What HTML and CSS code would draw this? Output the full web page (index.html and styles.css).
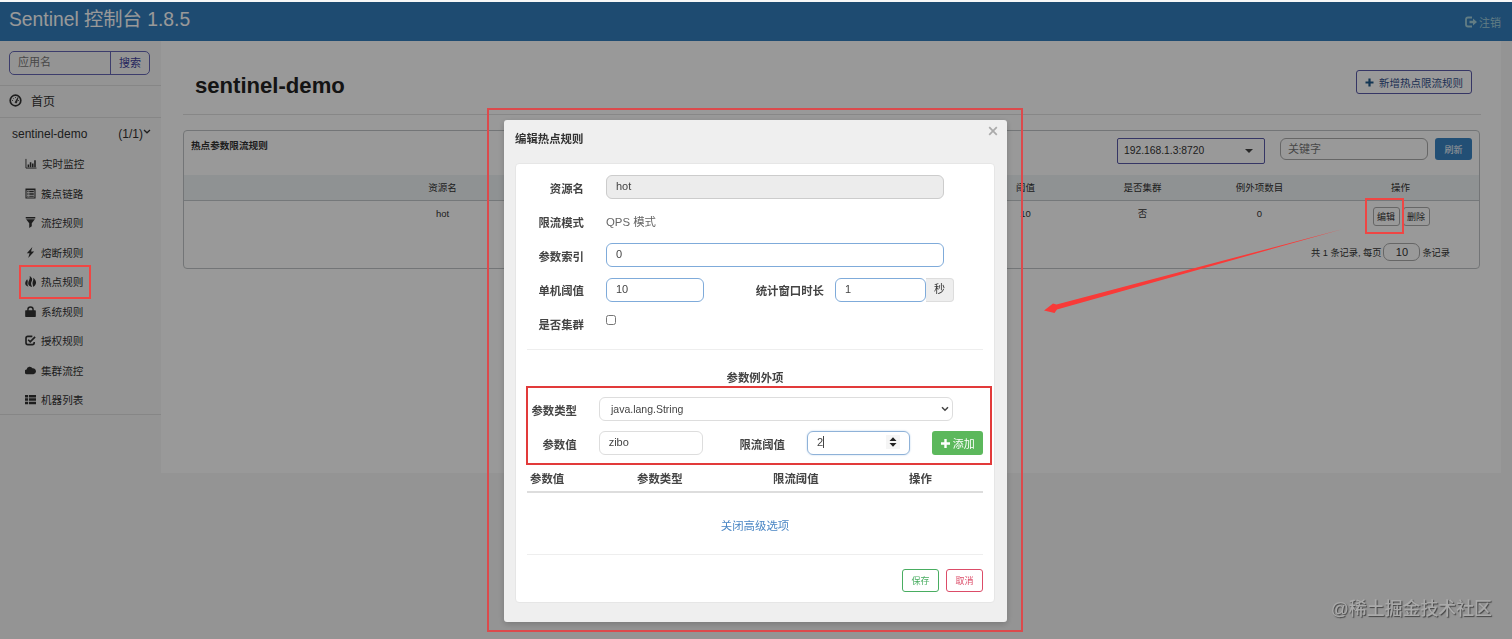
FILE: index.html
```html
<!DOCTYPE html>
<html>
  <head>
    <meta charset="utf-8">
    <title>Sentinel 控制台</title>
    <link rel="stylesheet" href="styles.css">
  </head>
  <body>
    <header class="navbar">
      <span class="brand">Sentinel 控制台 1.8.5</span>
      <a class="logout">
        <svg width="12" height="12" viewBox="0 0 12 12"><path d="M7 1.500H3Q1 1.500 1 3.500v5q0 2 2 2h4" fill="none" stroke="currentColor" stroke-width="1.800"/><path d="M4.500 4.700H8V2.400L12 6 8 9.600V7.300H4.500z" fill="currentColor"/></svg>
        <span>注销</span>
      </a>
    </header>
    <div class="wrapper">
      <aside class="sidebar">
        <div class="search">
          <input type="text" placeholder="应用名">
          <button>搜索</button>
        </div>
        <a class="home">
          <svg width="13" height="13" viewBox="0 0 13 13"><circle cx="6.500" cy="6.500" r="5.300" fill="none" stroke="currentColor" stroke-width="1.700"/><path d="M6 8.500l3-5-1.500 5.500zM3 6.500h1M4 4l.7.7M6.500 3v1M9 6.500h1" stroke="currentColor" stroke-width=".8" fill="currentColor"/></svg>
          <span>首页</span>
        </a>
        <a class="app">
          <span>sentinel-demo</span>
          <span class="count">(1/1)<svg width="8" height="8" viewBox="0 0 8 8"><path d="M1 2l3 2.800L7 2" fill="none" stroke="currentColor" stroke-width="1.300"/></svg></span>
        </a>
        <ul class="menu">
          <li><svg class="wide" viewBox="0 0 12 12"><path d="M.500 1v10H12" fill="none" stroke="currentColor"/><path d="M2.300 7h1.700v3H2.300zM4.700 4.500h1.700V10H4.700zM7.100 6h1.700v4H7.100zM9.500 2.500h1.700V10H9.500z"/></svg>实时监控</li>
          <li><svg viewBox="0 0 12 12"><path fill-rule="evenodd" d="M.500.500h11v11H.500zM1.700 2.500v7.800h8.600V2.500z"/><path d="M2.500 3.300h1.300v1.100H2.500zM4.600 3.300h5v1.100h-5zM2.500 5.100h1.300v1.100H2.500zM4.600 5.100h5v1.100h-5zM2.500 6.900h1.300V8H2.500zM4.600 6.900h5V8h-5zM2.500 8.600h1.300v1H2.500zM4.600 8.600h5v1h-5z"/></svg>簇点链路</li>
          <li><svg viewBox="0 0 12 12"><path d="M.8 0h10.400v1.700H.8zM1.200 2.500h9.600L7.400 6.700V10L4.600 12V6.700z"/></svg>流控规则</li>
          <li><svg viewBox="0 0 12 12"><path d="M8 0L2 6.800h3L3.500 12 10 4.900H6.600z"/></svg>熔断规则</li>
          <li><svg viewBox="0 0 12 12"><path d="M5 0C8.200 1.700 8.300 4 7.200 6c-.9 1.700-.8 3.600.6 6C5 11.500 3.300 10 3.500 7.500 3.700 5 6 3.500 5 0zM2.300 3.500C.8 5.500-.2 7 .4 9c.5 1.500 1.800 2.300 3.400 2.600C2.700 10.500 2.600 8.500 2.900 7c.2-1.300.2-2.500-.6-3.500zM8.800 2c3 2.200 3.700 4.600 2.900 6.700-.6 1.700-1.500 2.600-3 3.100C9 10.500 8 9 8.200 7.500 8.500 5.500 9.600 4.500 8.800 2z"/></svg>热点规则</li>
          <li><svg viewBox="0 0 12 12"><path d="M3.200 6V3.800a2.800 2.800 0 0 1 5.600 0V6" fill="none" stroke="currentColor" stroke-width="1.600"/><rect x=".2" y="4.700" width="11.600" height="7.300" rx=".7"/></svg>系统规则</li>
          <li><svg viewBox="0 0 12 12"><path d="M8 1.500H3Q1.100 1.500 1.100 3.400v5Q1.100 10.500 3 10.500h5q2 0 2-2V7.500M3.500 5.200l2.200 2.200L11 2" fill="none" stroke="currentColor" stroke-width="1.800"/></svg>授权规则</li>
          <li><svg viewBox="0 0 12 12"><path d="M2.500 10A2.500 2.500 0 0 1 1.700 5 3.500 3.500 0 0 1 8.200 3.600 3.200 3.200 0 1 1 9.200 10z"/></svg>集群流控</li>
          <li><svg viewBox="0 0 12 12"><path d="M0 1h3.300v2.700H0zM4.200 1H12v2.700H4.200zM0 4.700h3.300v2.700H0zM4.200 4.700H12v2.700H4.200zM0 8.400h3.300v2.700H0zM4.200 8.400H12v2.700H4.200z"/></svg>机器列表</li>
        </ul>
      </aside>
      <main class="content">
        <div class="title-row">
          <h1>sentinel-demo</h1>
          <button class="btn-add-rule"><svg width="9" height="9" viewBox="0 0 9 9"><path d="M3.400.500h2.200v2.900h2.900v2.200H5.600v2.900H3.400V5.600H.500V3.400h2.900z" fill="currentColor"/></svg>新增热点限流规则</button>
        </div>
        <section class="card">
          <div class="card-head">
            <span class="card-title">热点参数限流规则</span>
            <div class="machine">192.168.1.3:8720<i class="caret-down"></i></div>
            <input class="keyword" type="text" placeholder="关键字">
            <button class="btn-refresh">刷新</button>
          </div>
          <table class="rules">
            <colgroup><col class="col-name"><col class="col-mode"><col class="col-num"><col class="col-num"><col class="col-num"><col></colgroup>
            <tr><th>资源名</th><th></th><th>阈值</th><th>是否集群</th><th>例外项数目</th><th class="actions-head">操作</th></tr>
            <tr><td>hot</td><td></td><td>10</td><td>否</td><td>0</td><td class="actions"><button>编辑</button><button>删除</button></td></tr>
          </table>
          <div class="pager">共 1 条记录, 每页 <input type="text" value="10"> 条记录</div>
        </section>
      </main>
    </div>

    <div class="backdrop"></div>

    <div class="modal">
      <div class="modal-head">
        <span>编辑热点规则</span>
        <svg class="close" width="10" height="10" viewBox="0 0 10 10"><path d="M1.200 1.200l7.600 7.600M8.800 1.200L1.200 8.800" stroke="currentColor" stroke-width="1.700"/></svg>
      </div>
      <div class="panel">
        <div class="row">
          <label>资源名</label>
          <input class="long" type="text" value="hot" disabled>
        </div>
        <div class="row">
          <label>限流模式</label>
          <span class="static">QPS 模式</span>
        </div>
        <div class="row">
          <label>参数索引</label>
          <input class="long blue" type="text" value="0">
        </div>
        <div class="row">
          <label>单机阈值</label>
          <input class="short blue" type="text" value="10">
          <label class="second">统计窗口时长</label>
          <input class="window blue" type="text" value="1"><span class="addon">秒</span>
        </div>
        <div class="row">
          <label>是否集群</label>
          <input type="checkbox">
        </div>
        <h4>参数例外项</h4>
        <div class="row item-row">
          <label>参数类型</label>
          <div class="select">java.lang.String<svg width="8" height="6" viewBox="0 0 8 6"><path d="M1 1.200l3 3 3-3" fill="none" stroke="currentColor" stroke-width="1.500"/></svg></div>
        </div>
        <div class="row item-row">
          <label>参数值</label>
          <input class="value" type="text" value="zibo">
          <label class="limit">限流阈值</label>
          <div class="number"><span>2</span><svg width="14" height="14" viewBox="0 0 14 14"><path d="M0 0h14v14H0z" fill="#f5f5f5"/><path d="M3.500 6L7 2.300 10.500 6zM3.500 8L7 11.700 10.500 8z" fill="#222"/></svg></div>
          <button class="btn-add"><svg width="9" height="9" viewBox="0 0 9 9"><path d="M3.300 0h2.400v3.300H9v2.400H5.700V9H3.300V5.700H0V3.300h3.300z" fill="#fff"/></svg>添加</button>
        </div>
        <div class="items-head">
          <span>参数值</span><span>参数类型</span><span>限流阈值</span><span>操作</span>
        </div>
        <a class="toggle">关闭高级选项</a>
        <div class="footer">
          <button class="save">保存</button>
          <button class="cancel">取消</button>
        </div>
      </div>
    </div>

    <div class="mark mark-menu"></div>
    <div class="mark mark-edit"></div>
    <div class="mark mark-modal"></div>
    <div class="mark mark-items"></div>
    <svg class="arrow" width="300" height="86" viewBox="0 0 300 86"><path d="M299 0L12.500 75.500 9 74.500 0 81.500l10.500 2.500L13 80.500z" fill="#f83a38"/></svg>
    <div class="watermark">@稀土掘金技术社区</div>
  </body>
</html>
```
FILE: styles.css
```css
* {
  box-sizing: border-box;
}
body {
  margin: 0;
  height: 639px;
  overflow: hidden;
  padding-top: 2px;
  background: #f7f7f7;
  color: #333;
  font-family: "Liberation Sans", "Noto Sans CJK SC", sans-serif;
  font-size: 11px;
}
input,
button {
  font-family: inherit;
  font-size: 11px;
  color: inherit;
  margin: 0;
  background: transparent;
}
button {
  display: flex;
  align-items: center;
  justify-content: center;
  padding: 0;
  white-space: nowrap;
}
.navbar {
  display: flex;
  align-items: center;
  justify-content: space-between;
  height: 39px;
  padding: 0 11px 0 9px;
  background: #337dbc;
  color: #fff;
}
.brand {
  font-size: 19.3px;
  line-height: 36px;
  padding-bottom: 3px;
}
.logout {
  display: flex;
  align-items: center;
  gap: 2px;
  color: #a3d0dc;
}
.wrapper {
  display: flex;
  align-items: flex-start;
}
.sidebar {
  width: 161px;
  height: 374px;
  border-bottom: 1px solid #e0e0e0;
  color: #333;
}
.search {
  display: flex;
  margin: 10px 0 10px 9px;
  width: 141px;
  height: 24px;
  border: 1px solid #6667b4;
  border-radius: 5px;
}
.search input {
  width: 101px;
  border: 0;
  border-right: 1px solid #6667b4;
  padding: 0 8px 2px;
}
.search button {
  flex: 1;
  border: 0;
  padding-bottom: 2px;
  color: #3f3f9c;
}
::placeholder {
  color: #777;
}
.home {
  display: flex;
  align-items: center;
  gap: 9px;
  height: 33px;
  padding: 0 0 2px 9px;
  border-top: 1px solid #e0e0e0;
  border-bottom: 1px solid #e0e0e0;
  font-size: 12px;
}
.app {
  display: flex;
  justify-content: space-between;
  height: 30px;
  padding: 0 10px 0 12px;
  line-height: 32px;
  font-size: 12px;
}
.count svg {
  vertical-align: 2px;
}
.menu {
  margin: 0;
  padding: 1px 0 0;
  list-style: none;
}
.menu li {
  display: flex;
  align-items: center;
  gap: 5px;
  height: 29.5px;
  padding-left: 25px;
  font-size: 10.6px;
}
.menu svg {
  width: 11px;
  height: 11px;
  fill: currentColor;
}
.menu .wide {
  width: 12px;
}
.content {
  width: 1340px;
  height: 432px;
  padding: 0 20px 0 22px;
  background: #fff;
}
.title-row {
  display: flex;
  align-items: flex-start;
  justify-content: space-between;
  height: 74px;
  padding: 29px 9px 0 12px;
  border-bottom: 1px solid #e2e2e2;
  margin-bottom: 15px;
}
h1 {
  margin: 3px 0 0;
  font-size: 22.1px;
  line-height: 26px;
  color: #222;
}
.btn-add-rule {
  gap: 5px;
  width: 116px;
  height: 24px;
  border: 1px solid #5a5aa8;
  border-radius: 3px;
  color: #33508c;
  font-size: 10.5px;
}
.btn-add-rule svg {
  color: #205a8c;
}
.card {
  width: 1297px;
  height: 139px;
  border: 1px solid #c0c4c6;
  border-radius: 4px;
}
.card-head {
  display: flex;
  height: 44px;
  padding: 7px 7px 0;
}
.card-title {
  flex: 1;
  font-size: 9.6px;
  font-weight: bold;
  line-height: 16px;
}
.machine {
  display: flex;
  align-items: center;
  justify-content: space-between;
  width: 148px;
  height: 26px;
  padding: 0 11px 1px 6px;
  border: 1px solid #5a5aa8;
  border-radius: 2px;
  font-size: 10.3px;
}
.caret-down {
  border: 4px solid transparent;
  border-top-color: #444;
  border-bottom: 0;
}
.keyword {
  width: 148px;
  height: 22px;
  margin: 0 7px 0 15px;
  padding: 0 7px 1px;
  border: 1px solid #aaa;
  border-radius: 6px;
}
.btn-refresh {
  width: 37px;
  height: 22px;
  border: 0;
  border-radius: 3px;
  background: #3a84c4;
  color: #fff;
  font-size: 9px;
}
.rules {
  width: 100%;
  table-layout: fixed;
  border-collapse: collapse;
  font-size: 9.5px;
  text-align: center;
}
.col-name {
  width: 517px;
}
.col-mode {
  width: 266px;
}
.col-num {
  width: 117px;
}
.rules th {
  height: 25px;
  padding: 0 0 1px;
  background: #eff3f5;
  border-bottom: 1px solid #c4c9cb;
  font-weight: normal;
}
.rules th.actions-head {
  padding-left: 4px;
}
.rules td {
  height: 34px;
  padding: 0;
  line-height: 25px;
  vertical-align: top;
}
.rules td.actions {
  display: flex;
  justify-content: center;
  gap: 3px;
  padding: 6px 0 0 5px;
}
.actions button {
  width: 27px;
  height: 19px;
  border: 1px solid #aaa;
  border-radius: 3px;
  font-size: 9px;
}
.pager {
  display: flex;
  justify-content: flex-end;
  align-items: center;
  gap: 2px;
  height: 32px;
  padding-right: 29px;
  margin-top: 1px;
  font-size: 9.2px;
}
.pager input {
  width: 37px;
  height: 18px;
  border: 1px solid #aaa;
  border-radius: 7px;
  text-align: center;
}
.backdrop {
  position: fixed;
  top: 2px;
  right: 0;
  bottom: 0;
  left: 0;
  background: rgba(0, 0, 0, 0.4);
}

/* modal */
.modal {
  position: fixed;
  top: 120px;
  left: 504px;
  width: 503px;
  height: 502px;
  padding: 0 12px 0 11px;
  background: #efefef;
  border-radius: 3px;
  box-shadow: 0 2px 6px rgba(0, 0, 0, 0.2);
}
.modal-head {
  display: flex;
  justify-content: space-between;
  height: 43px;
  padding-top: 11px;
  font-size: 11.4px;
  font-weight: bold;
  line-height: 16px;
}
.close {
  margin: -5px -3px 0 0;
  color: #aaa;
}
.panel {
  height: 440px;
  padding: 7px 11px 0;
  background: #fff;
  border: 1px solid #e6e6e6;
  border-radius: 4px;
}
.row {
  display: flex;
  align-items: center;
  height: 34.2px;
  padding-bottom: 2px;
}
.row label {
  width: 57px;
  margin-right: 22px;
  padding-top: 1px;
  text-align: right;
  white-space: nowrap;
  color: #444;
  font-size: 11.4px;
  font-weight: bold;
}
.row input[type=text],
.select,
.number {
  height: 24px;
  padding: 0 9px 2px;
  border: 1px solid #ddd;
  border-radius: 6px;
  color: #444;
}
.row .long {
  width: 338px;
}
.row .long:disabled {
  background: #ececec;
  border-color: #ccc;
}
.row .blue {
  border-color: #7fabda !important;
}
.row .short {
  width: 98px;
}
.static {
  font-size: 11.4px;
  color: #666;
}
.row .second {
  width: 120px;
  margin-right: 11px;
}
.row .window {
  width: 91px;
  border-radius: 6px 0 0 6px;
}
.addon {
  width: 28px;
  height: 24px;
  border: 1px solid #ddd;
  border-left: 0;
  border-radius: 0 4px 4px 0;
  background: #eee;
  line-height: 20px;
  text-align: center;
}
.row input[type=checkbox] {
  width: 10px;
  height: 10px;
  margin-bottom: 7px;
}
h4 {
  height: 43px;
  margin: 7px 0 0;
  padding-top: 20px;
  border-top: 1px solid #eee;
  font-size: 11.4px;
  line-height: 17px;
  text-align: center;
  color: #444;
}
.item-row {
  padding: 0;
}
.item-row label {
  width: 50px;
}
.select {
  display: flex;
  align-items: center;
  justify-content: space-between;
  width: 354px;
  padding: 0 3px 1px 11px !important;
  font-size: 10.5px;
}
.row .value {
  width: 104px;
}
.row .limit {
  width: 83px;
  margin-right: 22px;
}
.number {
  display: flex;
  align-items: center;
  justify-content: space-between;
  width: 104px;
  border-color: #8fb2d8 !important;
  box-shadow: 0 0 2px #b8d0ea;
}
.number span {
  border-right: 1px solid #444;
}
.btn-add {
  gap: 3px;
  width: 51px;
  height: 24px;
  margin-left: 22px;
  border: 0;
  border-radius: 3px;
  background: #5cb85c;
  color: #fff;
}
.items-head {
  display: grid;
  grid-template-columns: 107px 136px 136px 1fr;
  height: 33px;
  padding: 12px 0 0 3px;
  border-bottom: 2px solid #ddd;
  color: #444;
  font-size: 11.4px;
  font-weight: bold;
  line-height: 15px;
}
.toggle {
  display: block;
  height: 62px;
  padding-top: 25px;
  border-bottom: 1px solid #eee;
  font-size: 11.4px;
  line-height: 17px;
  text-align: center;
  color: #4a86c4;
}
.footer {
  display: flex;
  justify-content: flex-end;
  gap: 7px;
  padding-top: 14px;
}
.footer button {
  width: 37px;
  height: 23px;
  border: 1px solid;
  border-radius: 3px;
  font-size: 9px;
}
.save {
  color: #49ad61;
}
.cancel {
  color: #dc4c68;
}

/* annotations */
.mark {
  position: fixed;
  border: 2px solid #ef4644;
}
.mark-menu {
  top: 265px;
  left: 19px;
  width: 72px;
  height: 34px;
}
.mark-edit {
  top: 198px;
  left: 1365px;
  width: 39px;
  height: 36px;
}
.mark-modal {
  top: 108px;
  left: 487px;
  width: 536px;
  height: 524px;
  border-color: #dc4a4c;
}
.mark-items {
  top: 386px;
  left: 526px;
  width: 466px;
  height: 79px;
  border-color: #e23a3a;
}
.arrow {
  position: fixed;
  top: 229px;
  left: 1044px;
}
.watermark {
  position: fixed;
  right: 20px;
  bottom: 19px;
  font-size: 17.9px;
  font-weight: 500;
  color: #aaa;
  text-shadow: 1px 1px 1px #444;
}
```
